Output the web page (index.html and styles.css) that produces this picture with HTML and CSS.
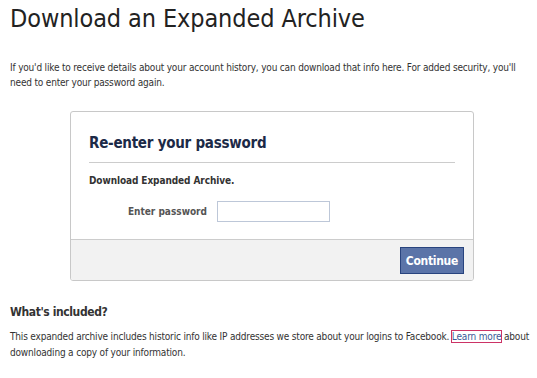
FILE: index.html
```html
<!DOCTYPE html>
<html lang="en">
<head>
    <meta charset="UTF-8">
    <title>Download an Expanded Archive</title>
    <link rel="stylesheet" href="styles.css">
</head>
<body>
    <div class="page">
        <h1 class="title">Download an Expanded Archive</h1>
        <p class="intro">If you'd like to receive details about your account history, you can download that info here. For added security, you'll need to enter your password again.</p>

        <!-- Password dialog -->
        <div class="dialog">
            <div class="dialog-body">
                <h2 class="dialog-title">Re-enter your password</h2>
                <div class="dialog-sub">Download Expanded Archive.</div>
                <div class="field">
                    <label class="field-label" for="pass">Enter password</label>
                    <input type="password" id="pass" class="text-input">
                </div>
            </div>
            <div class="dialog-footer">
                <button class="btn">Continue</button>
            </div>
        </div>

        <h3 class="section-title">What's included?</h3>
        <p class="info">This expanded archive includes historic info like IP addresses we store about your logins to Facebook. <a href="#" class="link">Learn more</a> about downloading a copy of your information.</p>
    </div>
</body>
</html>
```

FILE: styles.css
```css
/* Global styles */
body {
    font-family: Tahoma, "DejaVu Sans Condensed", "DejaVu Sans", sans-serif;
    font-size: 10px;
    letter-spacing: -0.18px;
    color: #333;
    background-color: #fff;
    margin: 0;
}

.page {
    padding: 0 2px 0 10px;
}

.title {
    font-weight: normal;
    font-size: 25px;
    letter-spacing: -0.1px;
    color: #222;
    margin: 0;
    padding-top: 4px;
    line-height: 30px;
}

.intro {
    margin: 26px 0 0;
    padding-right: 8px;
    line-height: 15px;
}

/* Dialog */
.dialog {
    width: 402px;
    margin: 21px 0 0 60px;
    border: 1px solid #c8c8c8;
    border-radius: 3px;
    overflow: hidden;
}

.dialog-body {
    padding: 20px 18px 17px;
}

.dialog-title {
    font-size: 15px;
    letter-spacing: -0.25px;
    color: #1c2a47;
    margin: 0;
    padding-bottom: 8px;
    border-bottom: 1px solid #ccc;
    line-height: 22px;
}

.dialog-sub {
    font-weight: bold;
    letter-spacing: -0.1px;
    margin-top: 10px;
    line-height: 15px;
}

.field {
    display: flex;
    align-items: center;
    margin-top: 13px;
}

.field-label {
    width: 118px;
    text-align: right;
    font-weight: bold;
    letter-spacing: 0;
    color: #555;
    padding-right: 10px;
}

.text-input {
    width: 109px;
    height: 17px;
    border: 1px solid #bdc7d8;
    padding: 1px;
    margin: 0;
}

.dialog-footer {
    background-color: #f2f2f2;
    border-top: 1px solid #ccc;
    display: flex;
    justify-content: flex-end;
    padding: 7px 9px 6px;
}

.btn {
    font-family: inherit;
    font-size: 12px;
    font-weight: bold;
    letter-spacing: -0.3px;
    color: #fff;
    background-color: #5b74a8;
    border: 1px solid #29447e;
    padding: 0 5px;
    height: 27px;
    cursor: pointer;
}

.section-title {
    font-size: 12px;
    letter-spacing: -0.4px;
    color: #333;
    margin: 23px 0 0;
    line-height: 16px;
}

.info {
    margin: 9px 0 0;
    line-height: 16px;
}

.link {
    color: #3b5998;
    text-decoration: none;
    outline: 1px solid #cc3366;
}
```
